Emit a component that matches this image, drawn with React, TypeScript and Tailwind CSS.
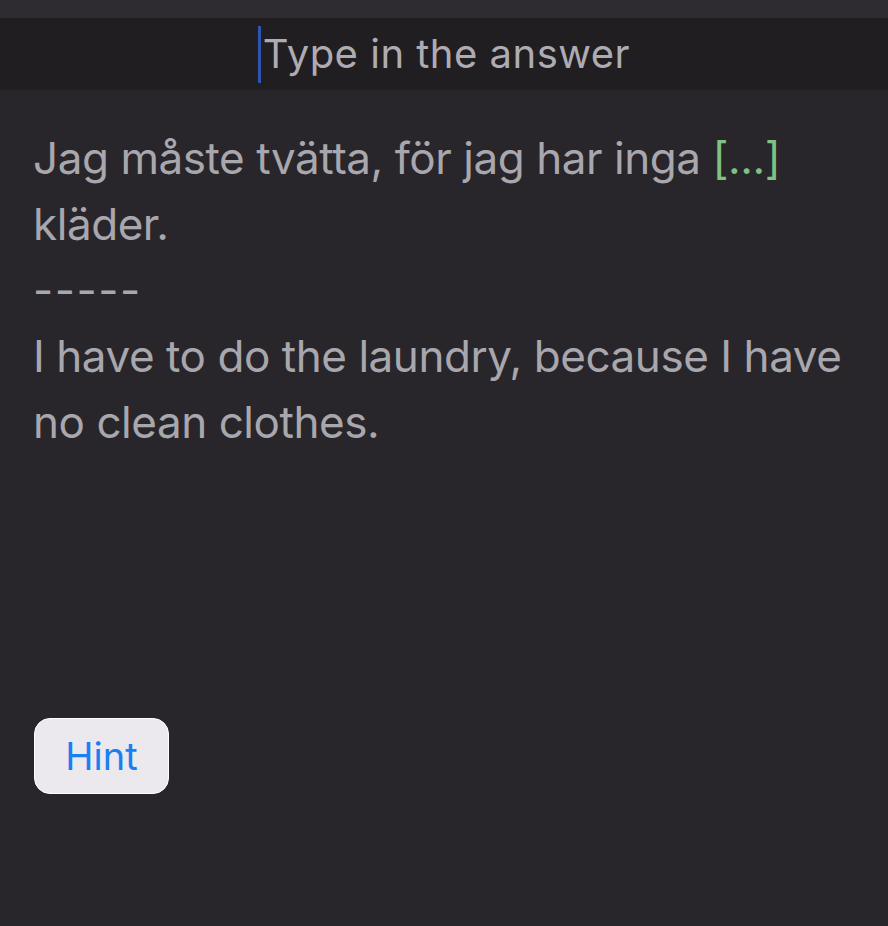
export default function App() {
  return (
    <div
      className="min-h-[926px] w-full bg-[#29262b] flex flex-col"
      style={{ fontFamily: "Inter, 'Noto Sans', sans-serif" }}
    >
      <div className="h-[18px] bg-[#2f2c31]" />
      <div className="h-[72px] bg-[#201e21] flex items-center justify-center">
        <div className="flex items-center">
          <span className="w-[3px] h-[57px] bg-[#2f55b3]" />
          <span className="text-[40px] leading-none text-[#aeacb2] tracking-[0.5px] ml-[2px]">
            Type in the answer
          </span>
        </div>
      </div>
      <div className="pl-[33px] pr-[35px] pt-[35px] text-[44px] leading-[66px] text-[#a8a7ad] tracking-[-0.45px]">
        <p>
          Jag måste tvätta, för jag har inga <span className="text-[#7ec283]">[...]</span> kläder.
        </p>
        <p className="tracking-[1.5px]">-----</p>
        <p>I have to do the laundry, because I have no clean clothes.</p>
      </div>
      <div className="px-[34px] mt-[263px]">
        <button className="w-[135px] h-[76px] rounded-[16px] bg-[#ebe9ee] border-[1.5px] border-white text-[#1a7ff0] text-[38px] leading-none">
          Hint
        </button>
      </div>
    </div>
  );
}
